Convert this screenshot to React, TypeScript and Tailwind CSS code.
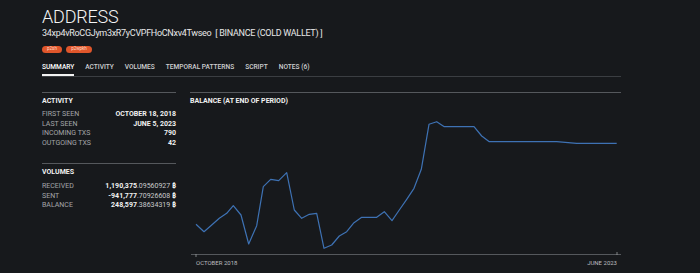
import type { ReactNode } from "react";

const FONT = "font-['Roboto','Noto_Sans','DejaVu_Sans',sans-serif]";

const tabs = ["SUMMARY", "ACTIVITY", "VOLUMES", "TEMPORAL PATTERNS", "SCRIPT", "NOTES (6)"];

const points: [number, number][] = [
  [196, 224.3], [204, 231.7], [211.7, 225], [219.3, 218.3], [226.7, 213.3], [233.3, 205.7],
  [241, 215], [248.7, 244], [256.7, 225.7], [263.3, 186.7], [270.7, 179.3], [278.7, 180.7],
  [286.7, 172.7], [294.3, 210], [301.7, 218.3], [309.3, 214.3], [316.7, 213.3], [324, 248.3],
  [331.7, 245], [339.3, 236], [346.7, 231.7], [354, 222.7], [361.7, 217.3], [369.3, 217.3],
  [376.7, 217.3], [384.3, 211.7], [392, 220.7], [399.3, 210], [406.7, 199.3], [414, 188.3],
  [421.3, 169.3], [429, 124.3], [436.7, 121.7], [444.3, 126.7], [474, 126.7], [481.7, 136],
  [489.3, 141.7], [556.7, 141.7], [576.7, 143.3], [616.7, 143.3],
];

function Row({ label, children }: { label: string; children: ReactNode }) {
  return (
    <div className="flex items-center justify-between text-[7px] leading-[9.7px]">
      <span className="text-[#a4a6a9]">{label}</span>
      <span className="font-bold text-[#f1f1f1]">{children}</span>
    </div>
  );
}

function Amount({ whole, frac }: { whole: string; frac: string }) {
  return (
    <>
      {whole}
      <span className="font-normal text-[#c9cacc]">{frac}</span> ₿
    </>
  );
}

export default function App() {
  return (
    <div className={`${FONT} h-[273px] w-[700px] overflow-hidden bg-[#17191c] px-[42px] text-white`}>
      <div className="w-[579px]">
        <h1 className="pt-[6px] text-[18px] font-light leading-[21px] tracking-[-0.2px] text-[#f4f4f4]">ADDRESS</h1>
        <p className="text-[9px] leading-[12px] tracking-[-0.3px] text-[#e8e8e8]">
          34xp4vRoCGJym3xR7yCVPFHoCNxv4Twseo&nbsp; [ BINANCE (COLD WALLET) ]
        </p>
        <div className="mt-[7px] flex gap-[4px]">
          <span className="flex h-[7px] w-[20px] items-center justify-center rounded-full bg-[#e0562b] text-[4.5px] leading-none text-[#ffd9c9]">
            p2sh
          </span>
          <span className="flex h-[7px] w-[26px] items-center justify-center rounded-full bg-[#e0562b] text-[4.5px] leading-none text-[#ffd9c9]">
            p2wpkh
          </span>
        </div>

        <div className="mt-[10px] flex gap-[11px] border-b border-[#3b3e42]">
          {tabs.map((t, i) => (
            <span
              key={t}
              className={
                i === 0
                  ? "border-b-2 border-[#f2f2f2] pb-[2px] text-[6.6px] font-medium leading-[9px] text-white"
                  : "border-b-2 border-transparent pb-[2px] text-[6.6px] font-medium leading-[9px] text-[#cfd0d2]"
              }
            >
              {t}
            </span>
          ))}
        </div>

        <div className="mt-[15px] flex gap-[14px]">
          <div className="w-[134px] shrink-0">
            <div className="border-t border-[#55585c] pt-[4px]">
              <div className="text-[7px] font-bold leading-[9px] text-[#f1f1f1]">ACTIVITY</div>
              <div className="mt-[4px]">
                <Row label="FIRST SEEN">OCTOBER 18, 2018</Row>
                <Row label="LAST SEEN">JUNE 5, 2023</Row>
                <Row label="INCOMING TXS">790</Row>
                <Row label="OUTGOING TXS">42</Row>
              </div>
            </div>
            <div className="mt-[14px] border-t border-[#55585c] pt-[4.5px]">
              <div className="text-[7px] font-bold leading-[9px] text-[#f1f1f1]">VOLUMES</div>
              <div className="mt-[4.5px]">
                <Row label="RECEIVED">
                  <Amount whole="1,190,375" frac=".09560927" />
                </Row>
                <Row label="SENT">
                  <Amount whole="-941,777" frac=".70926608" />
                </Row>
                <Row label="BALANCE">
                  <Amount whole="248,597" frac=".38634319" />
                </Row>
              </div>
            </div>
          </div>

          <div className="w-[431px]">
            <div className="border-t border-[#55585c] pt-[4px]">
              <div className="text-[7px] font-bold leading-[9px] text-[#f1f1f1]">BALANCE (AT END OF PERIOD)</div>
            </div>
            <svg width="431" height="152" viewBox="190 106 431 152" className="block">
              <line x1="191" y1="254.5" x2="621" y2="254.5" stroke="#55585c" strokeWidth="1.2" />
              <line x1="196" y1="254" x2="196" y2="257" stroke="#9a9c9f" strokeWidth="0.8" />
              <line x1="617" y1="252" x2="617" y2="255" stroke="#9a9c9f" strokeWidth="0.8" />
              <polyline
                points={points.map(([x, y]) => `${x},${y}`).join(" ")}
                fill="none"
                stroke="#3e72b4"
                strokeWidth="1.2"
                strokeLinejoin="round"
              />
            </svg>
            <div className="mt-[1px] flex justify-between pl-[6px] pr-[4px] text-[6px] leading-[7px] text-[#b9bbbe]">
              <span>OCTOBER 2018</span>
              <span>JUNE 2023</span>
            </div>
          </div>
        </div>
      </div>
    </div>
  );
}
